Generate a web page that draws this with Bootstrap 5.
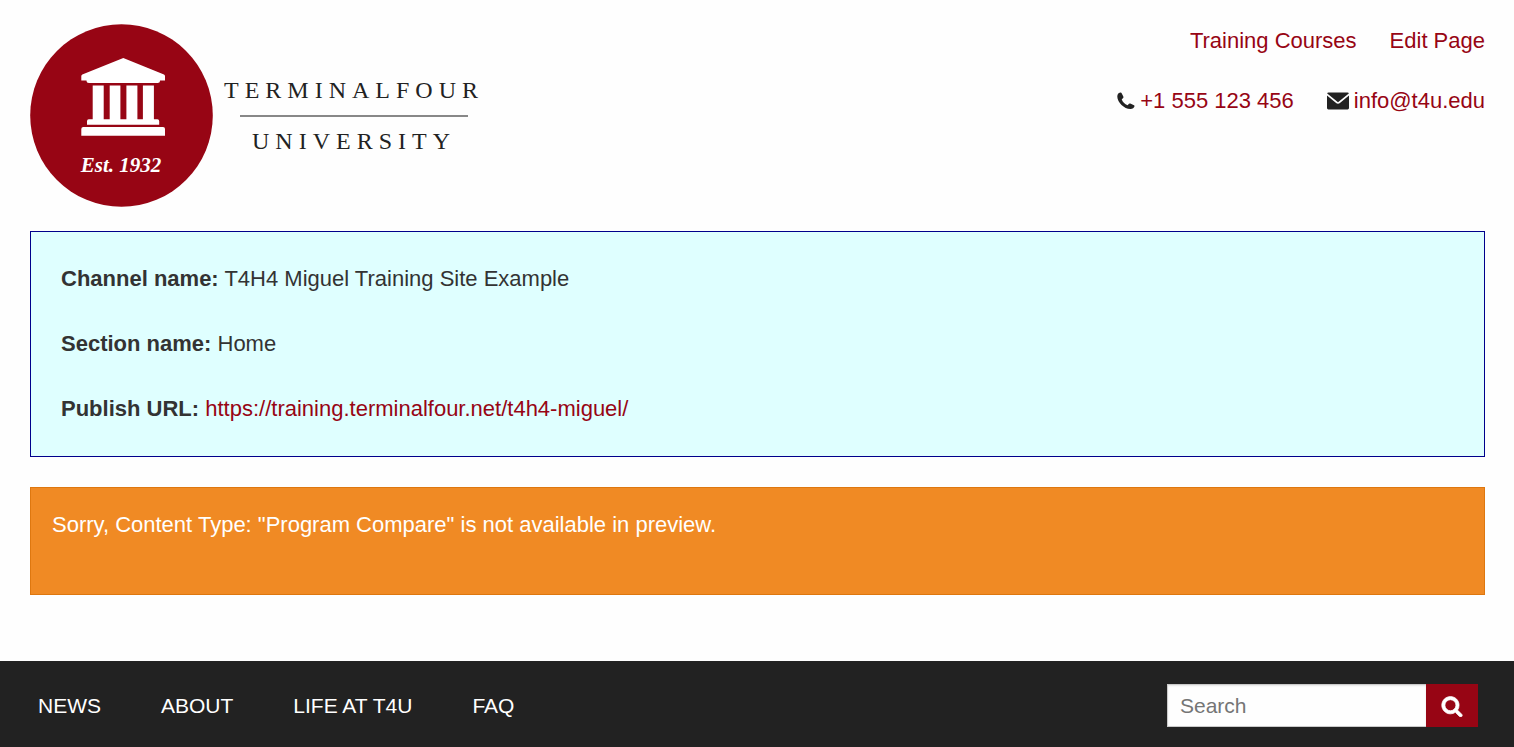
<!DOCTYPE html>
<html lang="en">
<head>
<meta charset="utf-8">
<meta name="viewport" content="width=device-width, initial-scale=1">
<title>TERMINALFOUR University</title>
<link href="https://cdn.jsdelivr.net/npm/bootstrap@5.3.0/dist/css/bootstrap.min.css" rel="stylesheet">
<style>
  :root { --brand: #970514; --ink: #222222; }
  body { background: #fefefe; color: var(--ink); font-family: "Liberation Sans", Arial, sans-serif; font-size: 22px; line-height: 34px; }
  .site-link { color: var(--brand); text-decoration: none; }
  .site-link:hover { text-decoration: underline; }
  .page-wrap { padding: 24px 29px 0 30px; }
  .site-header { margin-bottom: 24px; }
  .brand-link { color: var(--ink); text-decoration: none; gap: 11px; }
  .emblem { width: 183px; height: 183px; }
  .emblem text { font: italic bold 21px "Liberation Serif", serif; }
  .wordmark { font: 24px/28px "Liberation Serif", "Times New Roman", serif; letter-spacing: 6px; }
  .wordmark-top { padding-bottom: 11px; }
  .wordmark-bottom { padding-top: 10px; }
  .wordmark-rule { width: 228px; height: 2px; background: #888; }
  .header-links { gap: 26px; }
  .link-row { gap: 33px; }
  .contact-item { gap: 5px; }
  .info-box { background: #dfffff; border: 1px solid #00008b; color: #333; padding: 30px; margin-bottom: 30px; }
  .info-box p { margin-bottom: 31px; }
  .notice-box { background: #f08a24; border: 1px solid #de770f; color: #fff; padding: 20px 21px 52px; margin-bottom: 66px; }
  .site-footer { background: var(--ink); padding: 23px 36px 20px 38px; font-size: 21px; }
  .footer-links { gap: 60px; }
  .footer-links a { color: #fff; text-decoration: none; }
  .search-form { width: 311px; }
  .search-form .form-control { height: 43px; font-size: 21px; color: var(--ink); padding: 0 12px; background: #fefefe; border: 1px solid #cacaca; box-shadow: inset 0 1px 2px rgba(10,10,10,.1); }
  .search-form .form-control::placeholder { color: #757575; }
  .search-form .btn { background: var(--brand); width: 52px; height: 43px; border: 0; margin-left: 0; }
</style>
</head>
<body>
<div class="page-wrap">
  <header class="site-header d-flex flex-wrap justify-content-between">
    <a href="#" class="brand-link d-flex align-items-center">
      <svg class="emblem" viewBox="0 0 183 183" role="img" aria-label="University emblem">
        <circle cx="91.500" cy="91.500" r="91.300" fill="#970514"/>
        <g fill="#fff">
          <path d="M93.300 34l40.700 16.500q1 .5 1 1.500v4.500h-5q0 2.500-2.500 2.500h-68.500q-2.500 0-2.500-2.500h-5.200v-4.500q0-1 1-1.500z"/>
          <path d="M62.700 61.400h11v33.800h6v-33.800h10.700v33.800h6v-33.800h11v33.800h5.500v-33.800h11v33.800h3.500q1.800 0 1.800 2v3.500H57v-3.500q0-2 1.800-2h3.900z"/>
          <path d="M53.300 103h79.700q2 0 2 2v6.700H51.300V105q0-2 2-2z"/>
          <text x="91" y="148" text-anchor="middle">Est. 1932</text>
        </g>
      </svg>
      <span class="wordmark d-flex flex-column align-items-center">
        <span class="wordmark-top">TERMINALFOUR</span>
        <span class="wordmark-rule"></span>
        <span class="wordmark-bottom">UNIVERSITY</span>
      </span>
    </a>
    <div class="header-links d-flex flex-column">
      <nav class="link-row d-flex justify-content-end">
        <a class="site-link" href="#">Training Courses</a>
        <a class="site-link" href="#">Edit Page</a>
      </nav>
      <div class="link-row d-flex justify-content-end">
        <span class="contact-item d-flex align-items-center">
          <svg width="18" height="18" viewBox="0 0 18 18" fill="#222" aria-hidden="true"><path d="M.8 2.200C1.500 1 2.600.3 3.600.4c.6.100.9.500 1.200 1.100l1.500 3c.4.900.1 1.400-.6 1.900l-1 .8c.8 2.600 3 4.900 5.900 6.100l.9-1.100c.5-.7 1.100-.9 1.800-.6l3.200 1.300c.8.300 1.100.8 1 1.400-.3 1.500-2 2.800-3.900 2.800C7.200 17.200.400 10.400.300 4.800c0-1 .1-1.900.5-2.600z"/></svg>
          <a class="site-link" href="tel:+1555123456">+1 555 123 456</a>
        </span>
        <span class="contact-item d-flex align-items-center">
          <svg width="22" height="18" viewBox="0 0 22 18" aria-hidden="true"><path fill="#222" d="M1.500 .5h19q1.200 0 1.300 1L11 10.200.2 1.500q.1-1 1.300-1z"/><path fill="#222" d="M0 3.400l8.800 7.400q2.200 1.800 4.400 0L22 3.400v12.700q0 1.400-1.400 1.400H1.400Q0 17.500 0 16.100z"/></svg>
          <a class="site-link" href="mailto:info@t4u.edu">info@t4u.edu</a>
        </span>
      </div>
    </div>
  </header>
  <main>
    <section class="info-box">
      <p><strong>Channel name:</strong> T4H4 Miguel Training Site Example</p>
      <p><strong>Section name:</strong> Home</p>
      <p class="mb-0"><strong>Publish URL:</strong> <a class="site-link" href="https://training.terminalfour.net/t4h4-miguel/">https://training.terminalfour.net/t4h4-miguel/</a></p>
    </section>
    <div class="notice-box" role="alert">Sorry, Content Type: "Program Compare" is not available in preview.</div>
  </main>
</div>
<footer class="site-footer d-flex flex-wrap justify-content-between align-items-center">
  <nav class="footer-links d-flex flex-wrap">
    <a href="#">NEWS</a>
    <a href="#">ABOUT</a>
    <a href="#">LIFE AT T4U</a>
    <a href="#">FAQ</a>
  </nav>
  <form class="search-form input-group" role="search">
    <input type="search" class="form-control rounded-0" placeholder="Search" aria-label="Search">
    <button type="button" class="btn rounded-0 p-0 d-flex align-items-center justify-content-center" aria-label="Submit search">
      <svg width="22" height="22" viewBox="0 0 1792 1792" fill="#fff" stroke="#fff" stroke-width="60" aria-hidden="true"><path d="M1216 832q0-185-131.500-316.500t-316.500-131.500-316.500 131.500-131.500 316.500 131.500 316.500 316.500 131.500 316.500-131.500 131.500-316.500zm512 832q0 52-38 90t-90 38q-54 0-90-38l-343-342q-179 124-399 124-143 0-273.500-55.500t-225-150-150-225-55.500-273.500 55.500-273.500 150-225 225-150 273.500-55.500 273.500 55.500 225 150 150 225 55.500 273.500q0 220-124 399l343 343q37 37 37 90z"/></svg>
    </button>
  </form>
</footer>
</body>
</html>
